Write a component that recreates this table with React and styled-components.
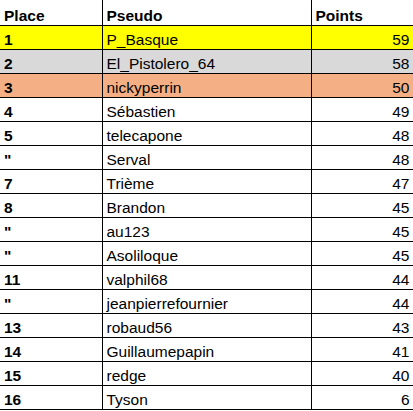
import styled, { createGlobalStyle } from 'styled-components';

const GlobalStyle = createGlobalStyle`
  body {
    margin: 0;
    background: #ffffff;
    font-family: 'Liberation Sans', Arial, sans-serif;
  }
`;

const Table = styled.table`
  border-collapse: collapse;
  table-layout: fixed;
  width: 413px;
  font-size: 15.5px;
  color: #000000;
`;

const Col = styled.col`
  width: ${(p) => p.w}px;
`;

const Row = styled.tr`
  background: ${(p) => p.bg || '#ffffff'};
`;

const Cell = styled.td`
  height: 24px;
  padding: 0 3px 2px 4px;
  box-sizing: border-box;
  vertical-align: bottom;
  line-height: 15px;
  border-bottom: 1px solid #000000;
  border-left: ${(p) => (p.first ? 'none' : '1px solid #000000')};
  border-right: ${(p) => (p.last ? '1px solid #000000' : 'none')};
  text-align: ${(p) => p.align || 'left'};
  font-weight: ${(p) => (p.bold ? 700 : 400)};
  white-space: nowrap;
  overflow: hidden;
`;

const HeadCell = styled(Cell).attrs({ as: 'th' })`
  height: 25px;
  font-weight: 700;
  text-align: left;
`;

const rows = [
  ['1', 'P_Basque', 59, '#ffff00'],
  ['2', 'El_Pistolero_64', 58, '#d9d9d9'],
  ['3', 'nickyperrin', 50, '#f4b084'],
  ['4', 'Sébastien', 49],
  ['5', 'telecapone', 48],
  ['"', 'Serval', 48],
  ['7', 'Trième', 47],
  ['8', 'Brandon', 45],
  ['"', 'au123', 45],
  ['"', 'Asoliloque', 45],
  ['11', 'valphil68', 44],
  ['"', 'jeanpierrefournier', 44],
  ['13', 'robaud56', 43],
  ['14', 'Guillaumepapin', 41],
  ['15', 'redge', 40],
  ['16', 'Tyson', 6],
];

function App() {
  return (
    <>
      <GlobalStyle />
      <Table>
        <colgroup>
          <Col w={102} />
          <Col w={209} />
          <Col w={102} />
        </colgroup>
        <thead>
          <Row>
            <HeadCell first>Place</HeadCell>
            <HeadCell>Pseudo</HeadCell>
            <HeadCell last>Points</HeadCell>
          </Row>
        </thead>
        <tbody>
          {rows.map(([place, name, pts, bg], i) => (
            <Row key={i} bg={bg}>
              <Cell first bold>{place}</Cell>
              <Cell>{name}</Cell>
              <Cell last align="right">{pts}</Cell>
            </Row>
          ))}
        </tbody>
      </Table>
    </>
  );
}

export default App;
